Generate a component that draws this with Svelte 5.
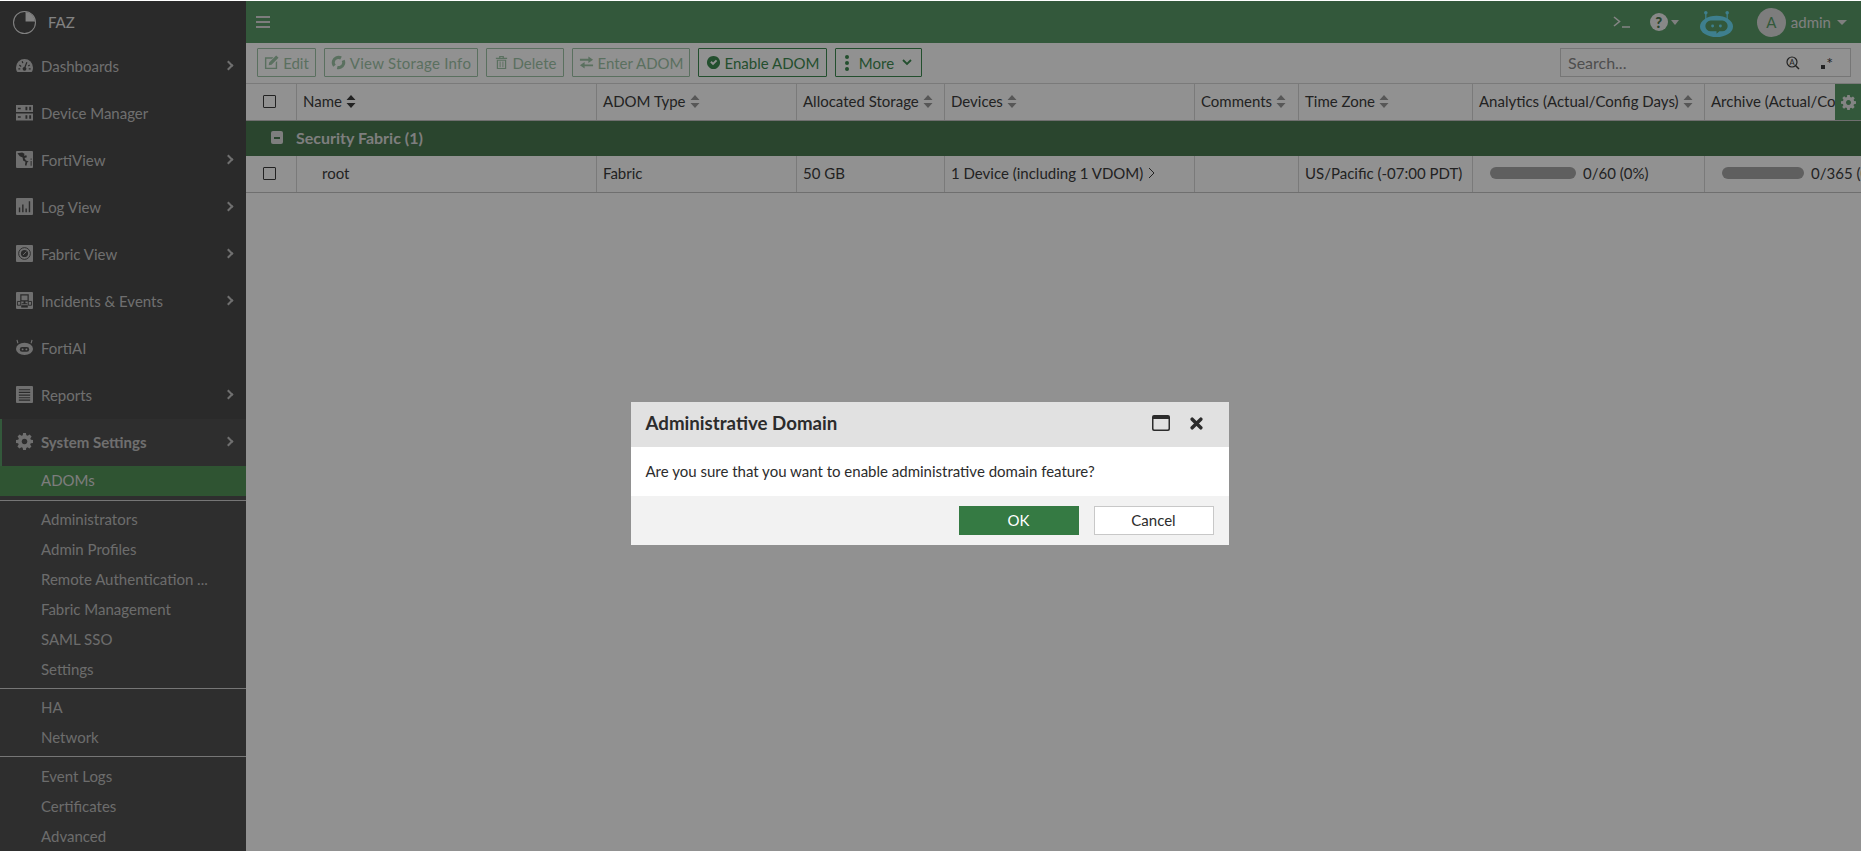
<script>
	const navItems = [
		{ label: 'Dashboards', icon: 'gauge', arrow: true },
		{ label: 'Device Manager', icon: 'device', arrow: false },
		{ label: 'FortiView', icon: 'map', arrow: true },
		{ label: 'Log View', icon: 'bars', arrow: true },
		{ label: 'Fabric View', icon: 'fabric', arrow: true },
		{ label: 'Incidents & Events', icon: 'incident', arrow: true },
		{ label: 'FortiAI', icon: 'bot', arrow: false },
		{ label: 'Reports', icon: 'report', arrow: true }
	];

	const subGroups = [
		['Administrators', 'Admin Profiles', 'Remote Authentication ...', 'Fabric Management', 'SAML SSO', 'Settings'],
		['HA', 'Network'],
		['Event Logs', 'Certificates', 'Advanced']
	];

	const columns = [
		{ label: 'Name', width: 300, dark: true },
		{ label: 'ADOM Type', width: 200 },
		{ label: 'Allocated Storage', width: 148 },
		{ label: 'Devices', width: 250 },
		{ label: 'Comments', width: 104 },
		{ label: 'Time Zone', width: 174 },
		{ label: 'Analytics (Actual/Config Days)', width: 232 },
		{ label: 'Archive (Actual/Config Days)', width: 300 }
	];
</script>

{#snippet navIcon(name)}
	<svg class="nav-icon" viewBox="0 0 18 18">
		{#if name === 'gauge'}
			<path d="M1.500 16C.4 14.500 0 13 0 11a9 9 0 0 1 18 0c0 2-.4 3.500-1.500 5z" fill="currentColor" />
			<path d="M9 12l2.500-6.500M3.500 8.500l2 1.500M2.500 12.500h2M14.500 8.500l-1.500 1M15.500 12.500h-2M6.500 4.500l.8 2" stroke="#4a4a4a" stroke-width="1.300" fill="none" />
			<circle cx="9" cy="12.500" r="2" fill="#4a4a4a" />
		{:else if name === 'device'}
			<path d="M0 1h18v7.500H0zM0 10h18v7.500H0z" fill="currentColor" />
			<path d="M2 4h3v1.500H2zM2 13h3v1.500H2zM10 3h2v3.500h-2zM14 3h2v3.500h-2zM10 12h2v3.500h-2zM14 12h2v3.500h-2z" fill="#4a4a4a" />
		{:else if name === 'map'}
			<rect x="0" y="0" width="18" height="18" rx="1" fill="currentColor" />
			<path d="M1.500 2.500l5-1 2.500 1.500-.5 2 2.500-.5.500 2-2.500 1 1.500 2.500 3 1-1.500 1-1 3.500-1.500-.5.5-3.500-2.500-1.500-.5-3-3-1.500z" fill="#4a4a4a" />
			<path d="M15.500 10.500h1v5h-1zM15.500 8h1v1.200h-1z" fill="#4a4a4a" />
		{:else if name === 'bars'}
			<rect x="0" y="0" width="18" height="18" rx="1" fill="currentColor" />
			<path d="M3 10h1.500v5H3zM6.500 7h1.500v8H6.500zM10 11h1.500v4H10zM13.500 3.500H15V15h-1.500z" fill="#4a4a4a" />
		{:else if name === 'fabric'}
			<rect x="0" y="0" width="18" height="18" rx="1" fill="currentColor" />
			<circle cx="9" cy="9" r="6.200" fill="none" stroke="#4a4a4a" stroke-width="1" />
			<circle cx="9" cy="9" r="3.800" fill="#4a4a4a" />
			<path d="M7.500 10.500L11 7" stroke="currentColor" stroke-width="1" />
		{:else if name === 'incident'}
			<rect x="0" y="0" width="18" height="18" rx="1" fill="currentColor" />
			<path d="M4.500 2.500h9v7.500H10v2h2v1H6v-1h2v-2H4.500zM5.800 3.800v5h6.400v-5z" fill="#4a4a4a" fill-rule="evenodd" />
			<path d="M1.500 10h3.500v4H1.500zM13 10h3.500v4H13z" fill="none" stroke="#4a4a4a" stroke-width="1" />
			<path d="M5.500 14h7v2.500h-7z" fill="#4a4a4a" />
		{:else if name === 'bot'}
			<ellipse cx="9" cy="10.500" rx="9" ry="6.500" fill="currentColor" />
			<rect x="4" y="8.500" width="10" height="5" rx="2.500" fill="#4a4a4a" />
			<circle cx="7" cy="11" r="1" fill="currentColor" />
			<circle cx="11" cy="11" r="1" fill="currentColor" />
			<path d="M1 1l1 3.500M17 1l-1 3.500" stroke="currentColor" stroke-width="1.200" />
		{:else if name === 'report'}
			<rect x="0" y="0" width="18" height="18" rx="1" fill="currentColor" />
			<path d="M3 4h12M3 6.800h12M3 9.600h12M3 12.400h12M3 15h12" stroke="#4a4a4a" stroke-width="1.200" />
		{/if}
	</svg>
{/snippet}

{#snippet gear(cls)}
	<svg class={cls} viewBox="0 0 24 24">
		<path
			fill="currentColor"
			fill-rule="evenodd"
			d="M10 0h4l.6 3.200 1.900.8 2.700-1.800 2.800 2.800-1.800 2.700.8 1.900L24 10v4l-3.200.6-.8 1.900 1.800 2.700-2.800 2.800-2.700-1.800-1.900.8L14 24h-4l-.6-3.200-1.900-.8-2.700 1.800-2.800-2.800 1.800-2.700-.8-1.900L0 14v-4l3.200-.6.800-1.900-1.800-2.700 2.800-2.800 2.700 1.800 1.900-.8zM12 8a4 4 0 1 0 .01 0z"
		/>
	</svg>
{/snippet}

{#snippet sort(dark)}
	<svg class="sort" class:dark viewBox="0 0 10 13">
		<path d="M5 0l4.500 5H.5zM5 13L.5 8h9z" fill="currentColor" />
	</svg>
{/snippet}

<div class="shell">
	<aside class="sidebar">
		<div class="brand">
			<svg class="brand-logo" viewBox="0 0 22 22">
				<circle cx="11" cy="11" r="10.500" fill="none" stroke="currentColor" stroke-width="1" />
				<path d="M12 1a9.500 9.500 0 0 1 9 9h-9z" fill="currentColor" />
			</svg>
			<span>FAZ</span>
		</div>
		<nav>
			{#each navItems as item}
				<div class="nav-item">
					{@render navIcon(item.icon)}
					<span>{item.label}</span>
					{#if item.arrow}<i class="chevron"></i>{/if}
				</div>
			{/each}
		</nav>
		<div class="system">
			<div class="nav-item active">
				{@render gear('nav-icon')}
				<span>System Settings</span>
				<i class="chevron"></i>
			</div>
			<div class="sub-group first">
				<div class="sub-item selected">ADOMs</div>
			</div>
			{#each subGroups as group}
				<div class="sub-group">
					{#each group as label}
						<div class="sub-item">{label}</div>
					{/each}
				</div>
			{/each}
		</div>
	</aside>

	<main>
		<header class="topbar">
			<div class="burger"><i></i><i></i><i></i></div>
			<div class="top-right">
				<svg class="term" viewBox="0 0 17 12">
					<path d="M1 1l5.500 4.500L1 10M9 11h8" fill="none" stroke="currentColor" stroke-width="1.600" />
				</svg>
				<div class="help">
					<span class="help-mark">?</span>
					<i class="caret"></i>
				</div>
				<svg class="robot" viewBox="0 0 34 28">
					<path d="M6 2v8M28 2v8" stroke="#6ee0fa" stroke-width="1.300" />
					<circle cx="6" cy="2.500" r="1.800" fill="#6ee0fa" />
					<circle cx="28" cy="2.500" r="1.800" fill="#6ee0fa" />
					<ellipse cx="17" cy="16.500" rx="17" ry="11" fill="#6ee0fa" />
					<path d="M11 10.500h12a5 5 0 0 1 0 11h-3l-3 2.500v-2.500h-6a5 5 0 0 1 0-11z" fill="#5a9c68" />
					<circle cx="13" cy="16" r="1.500" fill="#6ee0fa" />
					<circle cx="21" cy="16" r="1.500" fill="#6ee0fa" />
				</svg>
				<div class="avatar">A</div>
				<span class="user">admin</span>
				<i class="caret big"></i>
			</div>
		</header>

		<div class="toolbar">
			<button class="tool off w-edit">
				<svg viewBox="0 0 16 16"><path d="M1 2.500h9L8.500 4H2.500v9.500h10V8L14 6.500V15H1zM13 .5l2.500 2.500L8 10.500l-3 .5.5-3z" fill="currentColor" /></svg>
				Edit
			</button>
			<button class="tool off w-view">
				<svg viewBox="0 0 16 16"><circle cx="8" cy="8" r="5.500" fill="none" stroke="currentColor" stroke-width="3.400" pathLength="100" stroke-dasharray="36 10 44 10" transform="rotate(-25 8 8)" /></svg>
				View Storage Info
			</button>
			<button class="tool off w-del">
				<svg viewBox="0 0 16 16"><path d="M2 3h12v1.300H2zM5.500 1h5v2h-1.300v-.8H6.800V3H5.500zM3 5h10v10H3zm1.300 1.200v7.600h7.400V6.200zM6 7h1v6H6zm3 0h1v6H9z" fill="currentColor" fill-rule="evenodd" /></svg>
				Delete
			</button>
			<button class="tool off w-enter">
				<svg viewBox="0 0 16 16"><path d="M1 4h9V1.500L15 5l-5 3.500V6H1zM15 10H6V7.500L1 11l5 3.500V12h9z" fill="currentColor" /></svg>
				Enter ADOM
			</button>
			<button class="tool w-enable">
				<svg viewBox="0 0 16 16"><path d="M8 1a7 7 0 1 0 .01 0zM4.500 8l1.500-1.500 1.500 1.500 3-3L12 6.500 7.500 11z" fill="currentColor" fill-rule="evenodd" /></svg>
				Enable ADOM
			</button>
			<button class="tool w-more">
				<span class="dots"><i></i><i></i><i></i></span>
				More
				<svg class="down" viewBox="0 0 10 7"><path d="M1 1l4 4 4-4" fill="none" stroke="currentColor" stroke-width="1.800" /></svg>
			</button>
			<div class="search">
				<span>Search...</span>
				<span class="search-a">
					<svg viewBox="0 0 14 14">
						<circle cx="6" cy="6" r="5" fill="none" stroke="currentColor" stroke-width="1.200" />
						<path d="M9.500 9.500L13 13" stroke="currentColor" stroke-width="1.500" />
						<text x="6" y="8.500" font-size="7.500" text-anchor="middle" fill="currentColor" font-family="Lato">A</text>
					</svg>
				</span>
				<span class="search-re"><i></i>*</span>
			</div>
		</div>

		<div class="table">
			<div class="row head">
				<div class="cell check"><i class="box"></i></div>
				{#each columns as col}
					<div class="cell" style="width: {col.width}px">
						{col.label}{@render sort(col.dark)}
					</div>
				{/each}
				<div class="col-gear">{@render gear('gear-icon')}</div>
			</div>
			<div class="group-row">
				<i class="minus"></i>
				<span>Security Fabric (1)</span>
			</div>
			<div class="row body">
				<div class="cell check"><i class="box"></i></div>
				<div class="cell name" style="width: 300px">root</div>
				<div class="cell" style="width: 200px">Fabric</div>
				<div class="cell" style="width: 148px">50 GB</div>
				<div class="cell" style="width: 250px">
					1 Device (including 1 VDOM)
					<svg class="more-arrow" viewBox="0 0 7 12"><path d="M1 1l5 5-5 5" fill="none" stroke="currentColor" stroke-width="1" /></svg>
				</div>
				<div class="cell" style="width: 104px"></div>
				<div class="cell" style="width: 174px">US/Pacific (-07:00 PDT)</div>
				<div class="cell usage" style="width: 232px"><i class="bar wide"></i>0/60 (0%)</div>
				<div class="cell usage" style="width: 300px"><i class="bar"></i>0/365 (0%)</div>
			</div>
		</div>
	</main>

	<div class="backdrop">
		<section class="dialog">
			<div class="dialog-title">
				<h2>Administrative Domain</h2>
				<svg class="win" viewBox="0 0 18 16">
					<path d="M2 0h14a2 2 0 0 1 2 2v12a2 2 0 0 1-2 2H2a2 2 0 0 1-2-2V2a2 2 0 0 1 2-2zM1.500 4v9.500a1 1 0 0 0 1 1h13a1 1 0 0 0 1-1V4z" fill="currentColor" fill-rule="evenodd" />
				</svg>
				<svg class="close" viewBox="0 0 12 12">
					<path d="M2 2l8 8M10 2l-8 8" stroke="currentColor" stroke-width="3.200" stroke-linecap="round" />
				</svg>
			</div>
			<p>Are you sure that you want to enable administrative domain feature?</p>
			<div class="dialog-foot">
				<button class="ok">OK</button>
				<button class="cancel">Cancel</button>
			</div>
		</section>
	</div>
</div>

<style>
	:global(body) {
		margin: 0;
		background: #fff;
		font-family: Lato, 'Noto Sans', sans-serif;
	}

	.shell {
		position: relative;
		display: flex;
		height: 850px;
		margin-top: 1px;
		overflow: hidden;
		background: #fff;
		color: #3c3c3c;
		font-size: 14px;
	}

	.sidebar {
		flex: none;
		width: 246px;
		height: 850px;
		overflow: hidden;
		background: #4a4a4a;
		color: #c4c4c4;
		font-size: 15px;
	}

	.brand {
		display: flex;
		align-items: center;
		gap: 12px;
		height: 42px;
		padding-left: 13px;
		color: #e4e4e4;
	}

	.brand-logo {
		width: 23px;
		height: 23px;
	}

	.nav-item {
		display: flex;
		align-items: center;
		height: 47px;
		padding: 0 0 2px 16px;
		box-sizing: border-box;
	}

	.nav-icon {
		flex: none;
		width: 17px;
		height: 17px;
		margin-right: 8px;
	}

	.nav-item .chevron {
		margin-left: auto;
		margin-right: 14px;
	}

	.chevron {
		width: 5px;
		height: 5px;
		border-top: 2px solid currentColor;
		border-right: 2px solid currentColor;
		transform: rotate(45deg);
	}

	.system {
		background: #525252;
	}

	.active {
		border-left: 2px solid #5a9d68;
		padding-left: 14px;
		font-weight: 700;
	}

	.sub-group {
		padding: 3px 0 4px;
		border-top: 1px solid #d0d0d0;
	}

	.sub-group:last-child {
		padding: 4px 0 3px;
	}

	.sub-group.first {
		padding: 0 0 4px;
		border-top: 0;
	}

	.sub-item {
		display: flex;
		align-items: center;
		height: 30px;
		padding-left: 41px;
		color: #bfbfbf;
	}

	.sub-item.selected {
		padding-bottom: 2px;
		height: 28px;
		background: #549459;
		color: #dcdcdc;
	}

	main {
		flex: 1;
		min-width: 0;
		overflow: hidden;
	}

	.topbar {
		display: flex;
		align-items: center;
		height: 42px;
		padding: 0 14px 0 10px;
		background: #5a9c68;
		color: #e8e8e8;
	}

	.burger {
		display: flex;
		flex-direction: column;
		gap: 3px;
		width: 14px;
	}

	.burger i {
		height: 2px;
		background: #dcdcdc;
	}

	.top-right {
		display: flex;
		align-items: center;
		margin-left: auto;
	}

	.term {
		width: 17px;
		height: 12px;
		margin-right: 20px;
	}

	.help {
		display: flex;
		align-items: center;
		gap: 3px;
		margin-right: 21px;
	}

	.help-mark {
		width: 18px;
		height: 18px;
		border-radius: 50%;
		background: #f0f0f0;
		color: #4a7951;
		font-size: 15px;
		font-weight: 900;
		line-height: 18px;
		text-align: center;
	}

	.caret {
		width: 0;
		height: 0;
		border-left: 4.5px solid transparent;
		border-right: 4.5px solid transparent;
		border-top: 5px solid #e0e0e0;
	}

	.caret.big {
		border-left-width: 5px;
		border-right-width: 5px;
	}

	.robot {
		width: 33px;
		height: 28px;
		margin: 3px 24px 0 0;
	}

	.avatar {
		width: 29px;
		height: 29px;
		margin-right: 5px;
		border-radius: 50%;
		background: #dcdcdc;
		color: #5a9c68;
		font-size: 15px;
		line-height: 29px;
		text-align: center;
	}

	.user {
		margin-right: 6px;
		font-size: 15px;
		color: #e0e0e0;
	}

	.toolbar {
		display: flex;
		align-items: center;
		height: 41px;
		padding: 0 10px 1px 11px;
		box-sizing: border-box;
		border-bottom: 1px solid #d6d6d6;
		gap: 8px;
	}

	.tool {
		display: flex;
		align-items: center;
		justify-content: center;
		gap: 4px;
		height: 29px;
		padding: 0;
		border: 1px solid #3f8c52;
		border-radius: 1px;
		background: transparent;
		color: #3f8c52;
		font: inherit;
		font-size: 15px;
	}

	.tool svg {
		width: 15px;
		height: 15px;
	}

	.tool.off {
		opacity: 0.5;
	}

	.w-edit { width: 59px; }
	.w-view { width: 154px; letter-spacing: 0.28px; }
	.w-del { width: 78px; }
	.w-enter { width: 118px; }
	.w-enable { width: 129px; }
	.w-more { width: 87px; gap: 7px; }

	.tool .down {
		width: 10px;
		height: 7px;
		margin-left: 1px;
	}

	.dots {
		display: flex;
		flex-direction: column;
		gap: 2px;
		margin-right: 3px;
	}

	.dots i {
		width: 4px;
		height: 4px;
		border-radius: 50%;
		background: currentColor;
	}

	.search {
		display: flex;
		align-items: center;
		width: 291px;
		height: 29px;
		margin-left: auto;
		padding-left: 7px;
		box-sizing: border-box;
		border: 1px solid #cfcfcf;
		color: #8a8a8a;
		font-size: 16px;
	}

	.search-a {
		display: flex;
		width: 14px;
		height: 14px;
		margin-left: auto;
		color: #3c3c3c;
	}

	.search-re {
		position: relative;
		width: 12px;
		margin: 0 17px 0 21px;
		color: #3c3c3c;
		font-size: 16px;
		line-height: 14px;
		text-align: right;
	}

	.search-re i {
		position: absolute;
		left: 0;
		bottom: 1px;
		width: 4px;
		height: 4px;
		background: #3c3c3c;
	}

	.table {
		font-size: 15px;
	}

	.row {
		position: relative;
		display: flex;
		box-sizing: border-box;
	}

	.head {
		height: 37px;
		border-bottom: 1px solid #c4c4c4;
	}

	.body {
		height: 37px;
		border-bottom: 1px solid #c4c4c4;
	}

	.cell {
		display: flex;
		flex: none;
		align-items: center;
		box-sizing: border-box;
		padding: 0 0 2px 6px;
		border-right: 1px solid #d6d6d6;
		white-space: nowrap;
	}

	.check {
		justify-content: center;
		width: 51px;
		padding: 0 4px 1px 0;
	}

	.box {
		width: 11px;
		height: 11px;
		border: 1.500px solid #3c3c3c;
		border-radius: 1px;
	}

	.sort {
		flex: none;
		width: 10px;
		height: 13px;
		margin-left: 4px;
		color: #9a9a9a;
	}

	.sort.dark {
		color: #3c3c3c;
	}

	.col-gear {
		position: absolute;
		top: 0;
		right: 0;
		display: flex;
		align-items: center;
		justify-content: center;
		width: 26px;
		height: 36px;
		background: #5a9c68;
		color: #e8e8e8;
	}

	.gear-icon {
		width: 15px;
		height: 15px;
	}

	.group-row {
		display: flex;
		align-items: center;
		height: 35px;
		padding: 0 0 2px 25px;
		box-sizing: border-box;
		background: #4a7951;
		color: #dedede;
		font-size: 16px;
		font-weight: 700;
	}

	.minus {
		position: relative;
		width: 12px;
		height: 13px;
		margin-right: 13px;
		border-radius: 2px;
		background: #dedede;
	}

	.minus::after {
		content: '';
		position: absolute;
		left: 3px;
		right: 3px;
		top: 5.500px;
		height: 2px;
		background: #4a7951;
	}

	.name {
		padding-left: 25px;
	}

	.more-arrow {
		width: 7px;
		height: 12px;
		margin-left: 5px;
	}

	.usage {
		padding-left: 17px;
	}

	.bar {
		width: 86px;
		height: 12px;
		margin-right: 7px;
		border-radius: 6px;
		background: #a8a8a8;
	}

	.usage + .usage .bar {
		width: 82px;
	}

	.backdrop {
		position: absolute;
		inset: 0;
		display: flex;
		justify-content: center;
		align-items: flex-start;
		padding: 401px 2px 0 0;
		background: rgba(0, 0, 0, 0.43);
	}

	.dialog {
		width: 598px;
		background: #fff;
		color: #2c2c2c;
	}

	.dialog-title {
		display: flex;
		align-items: center;
		height: 45px;
		padding: 0 26px 3px 15px;
		box-sizing: border-box;
		background: #e1e1e1;
	}

	h2 {
		margin: 0 auto 0 0;
		font-size: 18.700px;
		font-weight: 700;
	}

	.win {
		width: 18px;
		height: 16px;
		margin-right: 20px;
	}

	.close {
		width: 13px;
		height: 13px;
	}

	p {
		display: flex;
		align-items: center;
		height: 49px;
		margin: 0;
		padding: 0 0 2px 15px;
		box-sizing: border-box;
		font-size: 15px;
	}

	.dialog-foot {
		display: flex;
		justify-content: flex-end;
		align-items: center;
		gap: 15px;
		height: 49px;
		padding-right: 15px;
		background: #f2f2f2;
	}

	.ok,
	.cancel {
		width: 120px;
		height: 29px;
		padding: 0 0 2px;
		font: inherit;
		font-size: 15px;
	}

	.ok {
		border: 0;
		background: #357a43;
		color: #fff;
	}

	.cancel {
		border: 1px solid #c8c8c8;
		background: #fff;
		color: #2c2c2c;
	}
</style>
